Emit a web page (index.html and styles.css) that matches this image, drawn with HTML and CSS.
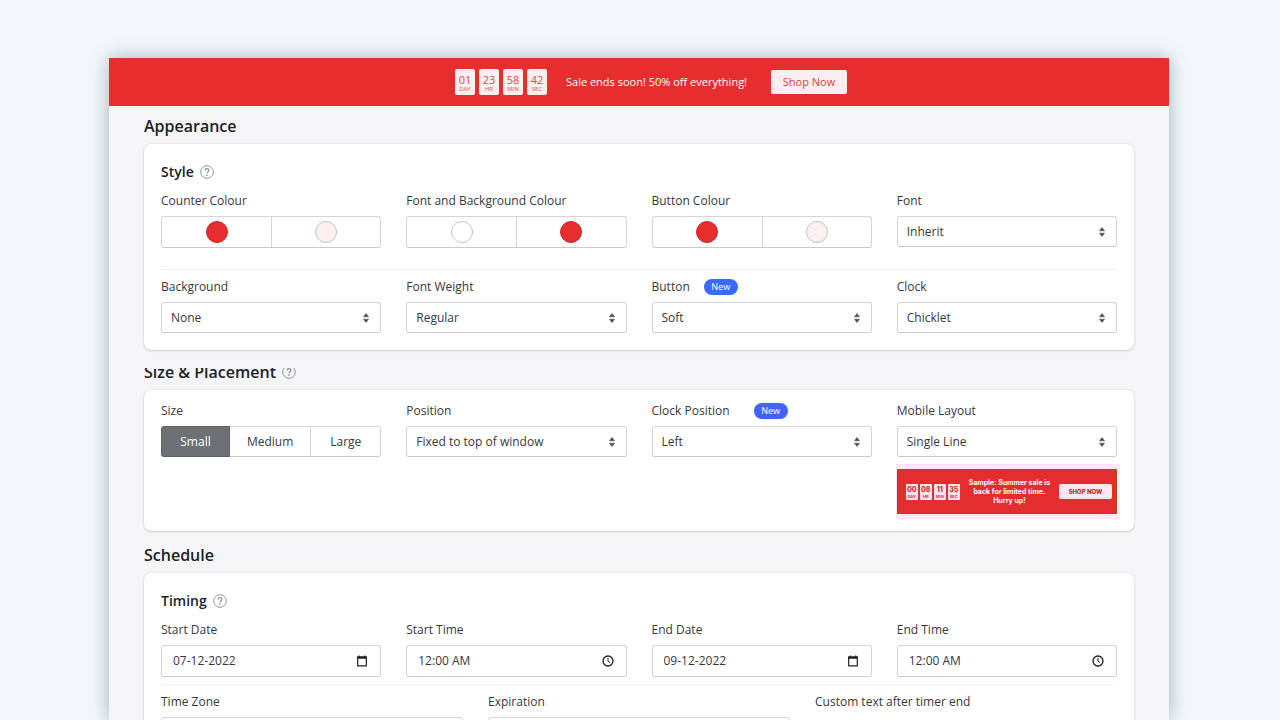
FILE: index.html
```html
<!DOCTYPE html>
<html lang="en">
<head>
<meta charset="utf-8">
<meta name="viewport" content="width=device-width, initial-scale=1">
<title>Countdown bar settings</title>
<link rel="stylesheet" href="styles.css">
</head>
<body>
<svg class="sprite" aria-hidden="true">
  <symbol id="help" viewBox="0 0 20 20">
    <circle cx="10" cy="10" r="9" fill="none" stroke="currentColor" stroke-width="1.4"/>
    <path d="M7.3 7.9C7.3 6.2 8.4 5.3 10 5.3s2.7 1 2.7 2.4c0 2-2.7 2.1-2.7 4.1" fill="none" stroke="currentColor" stroke-width="1.8"/>
    <circle cx="10" cy="14.4" r="1.2" fill="currentColor"/>
  </symbol>
  <symbol id="arrows" viewBox="0 0 8 10">
    <path d="M4 .5 6.6 3.8H1.4zM4 9.5 1.4 6.2h5.2z" fill="currentColor" stroke="currentColor" stroke-width=".5" stroke-linejoin="round"/>
  </symbol>
  <symbol id="calendar" viewBox="0 0 12 12">
    <path d="M1.7 2.2h8.6v8.6H1.7z" fill="none" stroke="currentColor" stroke-width="1.2"/>
    <path d="M1.1 1.6h9.8v2.2H1.1zM2.7.5h1.2v1.4H2.7zM8.1.5h1.2v1.4H8.1z" fill="currentColor"/>
  </symbol>
  <symbol id="clock" viewBox="0 0 12 12">
    <circle cx="6" cy="6" r="5" fill="none" stroke="currentColor" stroke-width="1.3"/>
    <path d="M6 3v3.2l2 1.4" fill="none" stroke="currentColor" stroke-width="1"/>
  </symbol>
</svg>

<div class="window">
  <header class="promo">
    <div class="timer">
      <div class="chip"><b>01</b><span>DAY</span></div>
      <div class="chip"><b>23</b><span>HR</span></div>
      <div class="chip"><b>58</b><span>MIN</span></div>
      <div class="chip"><b>42</b><span>SEC</span></div>
    </div>
    <p class="promo-text">Sale ends soon! 50% off everything!</p>
    <button class="promo-button" type="button">Shop Now</button>
  </header>

  <main class="content">
    <section class="section">
      <h1 class="section-title">Appearance</h1>
      <div class="card">
        <h2 class="card-title">Style <svg class="help"><use href="#help"/></svg></h2>
        <div class="row row-ruled">
          <div class="field">
            <span class="label">Counter Colour</span>
            <div class="swatches">
              <button type="button" aria-label="Counter text colour"><i class="dot dot-red"></i></button>
              <button type="button" aria-label="Counter box colour"><i class="dot dot-blush"></i></button>
            </div>
          </div>
          <div class="field">
            <span class="label">Font and Background Colour</span>
            <div class="swatches">
              <button type="button" aria-label="Font colour"><i class="dot dot-white"></i></button>
              <button type="button" aria-label="Background colour"><i class="dot dot-red"></i></button>
            </div>
          </div>
          <div class="field">
            <span class="label">Button Colour</span>
            <div class="swatches">
              <button type="button" aria-label="Button text colour"><i class="dot dot-red"></i></button>
              <button type="button" aria-label="Button fill colour"><i class="dot dot-blush"></i></button>
            </div>
          </div>
          <div class="field">
            <label class="label" for="font">Font</label>
            <div class="select"><select id="font"><option>Inherit</option></select><svg><use href="#arrows"/></svg></div>
          </div>
        </div>
        <div class="row">
          <div class="field">
            <label class="label" for="background">Background</label>
            <div class="select"><select id="background"><option>None</option></select><svg><use href="#arrows"/></svg></div>
          </div>
          <div class="field">
            <label class="label" for="weight">Font Weight</label>
            <div class="select"><select id="weight"><option>Regular</option></select><svg><use href="#arrows"/></svg></div>
          </div>
          <div class="field">
            <div class="label-line label-line-near"><label class="label" for="button">Button</label><span class="badge">New</span></div>
            <div class="select"><select id="button"><option>Soft</option></select><svg><use href="#arrows"/></svg></div>
          </div>
          <div class="field">
            <label class="label" for="clock-style">Clock</label>
            <div class="select"><select id="clock-style"><option>Chicklet</option></select><svg><use href="#arrows"/></svg></div>
          </div>
        </div>
      </div>
    </section>

    <section class="section">
      <h1 class="section-title section-title-cut">Size &amp; Placement <svg class="help"><use href="#help"/></svg></h1>
      <div class="card card-compact">
        <div class="row">
          <div class="field">
            <span class="label">Size</span>
            <div class="segments">
              <button class="active" type="button">Small</button>
              <button class="middle" type="button">Medium</button>
              <button type="button">Large</button>
            </div>
          </div>
          <div class="field">
            <label class="label" for="position">Position</label>
            <div class="select"><select id="position"><option>Fixed to top of window</option></select><svg><use href="#arrows"/></svg></div>
          </div>
          <div class="field">
            <div class="label-line"><label class="label" for="clock-position">Clock Position</label><span class="badge badge-violet">New</span></div>
            <div class="select"><select id="clock-position"><option>Left</option></select><svg><use href="#arrows"/></svg></div>
          </div>
          <div class="field">
            <label class="label" for="mobile">Mobile Layout</label>
            <div class="select"><select id="mobile"><option>Single Line</option></select><svg><use href="#arrows"/></svg></div>
            <div class="preview">
              <div class="mini-timer">
                <div class="mini-chip"><b>00</b><span>DAY</span></div>
                <div class="mini-chip"><b>08</b><span>HR</span></div>
                <div class="mini-chip"><b>11</b><span>MIN</span></div>
                <div class="mini-chip"><b>35</b><span>SEC</span></div>
              </div>
              <p class="preview-text">Sample: Summer sale is<br>back for limited time.<br>Hurry up!</p>
              <button class="preview-button" type="button">SHOP NOW</button>
            </div>
          </div>
        </div>
      </div>
    </section>

    <section class="section section-schedule">
      <h1 class="section-title">Schedule</h1>
      <div class="card">
        <h2 class="card-title">Timing <svg class="help"><use href="#help"/></svg></h2>
        <div class="row row-ruled row-tight">
          <div class="field">
            <label class="label" for="start-date">Start Date</label>
            <div class="entry"><input id="start-date" type="text" value="07-12-2022"><svg><use href="#calendar"/></svg></div>
          </div>
          <div class="field">
            <label class="label" for="start-time">Start Time</label>
            <div class="entry"><input id="start-time" type="text" value="12:00 AM"><svg><use href="#clock"/></svg></div>
          </div>
          <div class="field">
            <label class="label" for="end-date">End Date</label>
            <div class="entry"><input id="end-date" type="text" value="09-12-2022"><svg><use href="#calendar"/></svg></div>
          </div>
          <div class="field">
            <label class="label" for="end-time">End Time</label>
            <div class="entry"><input id="end-time" type="text" value="12:00 AM"><svg><use href="#clock"/></svg></div>
          </div>
        </div>
        <div class="row row-thirds">
          <div class="field">
            <label class="label" for="zone">Time Zone</label>
            <div class="select"><select id="zone"></select></div>
          </div>
          <div class="field">
            <label class="label" for="expiration">Expiration</label>
            <div class="select"><select id="expiration"></select></div>
          </div>
          <div class="field">
            <span class="label">Custom text after timer end</span>
          </div>
        </div>
      </div>
    </section>
  </main>
</div>
</body>
</html>
```
FILE: styles.css
```css
* { box-sizing: border-box; }

body {
  margin: 0;
  height: 100vh;
  overflow: hidden;
  padding: 58px 111px 0 109px;
  background: #f2f7fb;
  color: #36373b;
  font: 12px/20px "Open Sans", "Noto Sans", sans-serif;
}

h1, h2, p { margin: 0; }
button, input, select { font: inherit; color: inherit; }
button { padding: 0; border: 0; background: none; }
.sprite { display: none; }

.window {
  height: 100%;
  overflow: hidden;
  background: #f5f5f8;
  box-shadow: 0 0 18px rgba(70, 95, 100, 0.45);
}

.promo {
  display: flex;
  align-items: center;
  justify-content: center;
  height: 48px;
  padding-left: 24px;
  background: #e62e2e;
  color: #fff;
  font-size: 11px;
}

.timer { display: flex; gap: 4px; margin-right: 19px; }

.chip {
  display: flex;
  flex-direction: column;
  align-items: center;
  width: 20px;
  height: 26px;
  padding-top: 4px;
  border-radius: 2px;
  background: #faeff0;
  color: #e0494c;
}

.chip b { font-size: 11px; line-height: 13px; font-weight: 400; }
.chip span { font-size: 6px; line-height: 7px; }

.promo-text { font-weight: 500; }

.promo-button {
  width: 76px;
  height: 24px;
  margin-left: 24px;
  border-radius: 2px;
  background: #faeff0;
  color: #dc3f42;
}

.content { padding: 8px 35px 0; }
.section { padding-bottom: 10px; }
.section-schedule { padding-top: 2px; }

.section-title {
  display: flex;
  align-items: center;
  gap: 6px;
  margin-bottom: 6px;
  color: #202226;
  font-size: 16px;
  line-height: 24px;
  font-weight: 600;
}

.section-title-cut { clip-path: inset(8px 0 0 0); }

.help { width: 14px; height: 14px; color: #8d9196; }

.card {
  padding: 16px 17px 17px;
  border-radius: 7px;
  background: #fff;
  box-shadow: 0 0 2px rgba(60, 65, 80, 0.2), 0 1px 2px rgba(60, 65, 80, 0.18);
}

.card-compact { padding-top: 11px; }

.card-title {
  display: flex;
  align-items: center;
  gap: 6px;
  margin-bottom: 7px;
  color: #202226;
  font-size: 14px;
  line-height: 24px;
  font-weight: 600;
}

.row {
  display: grid;
  grid-template-columns: repeat(4, minmax(0, 1fr));
  gap: 25px;
}

.row-thirds { grid-template-columns: repeat(3, minmax(0, 1fr)); }

.row-ruled {
  margin-bottom: 7px;
  padding-bottom: 21px;
  border-bottom: 1px solid #eff1f3;
}

.row-tight { padding-bottom: 7px; }

.label { display: block; margin-bottom: 5px; }

.label-line { display: flex; gap: 24px; margin-bottom: 5px; }
.label-line .label { margin: 0; }
.label-line-near { gap: 14px; }

.badge {
  align-self: center;
  width: 34px;
  border-radius: 8px;
  background: #376cfb;
  color: #fff;
  font-size: 9px;
  line-height: 16px;
  text-align: center;
}

.badge-violet { background: #4262f9; box-shadow: 0 0 2px 1px #e0faff; }

.swatches, .segments, .select, .entry {
  border: 1px solid #d2d6d9;
  border-bottom-color: #c6cacd;
  border-radius: 3px;
  background: #fff;
}

.swatches {
  display: grid;
  grid-template-columns: 1fr 1fr;
  height: 32px;
}

.swatches button { display: grid; place-items: center; }
.swatches button + button { border-left: 1px solid #d2d6d9; }

.dot {
  width: 22px;
  height: 22px;
  border: 1px solid #c4c4c6;
  border-radius: 50%;
}

.dot-red { background: #e62e2e; border-color: #c3282c; }
.dot-blush { background: #faeff1; }
.dot-white { background: #fff; }

.select { display: grid; height: 31px; align-items: center; }
.select > * { grid-area: 1 / 1; }

.select select {
  width: 100%;
  height: 100%;
  padding: 0 24px 0 9px;
  border: 0;
  background: none;
  appearance: none;
}

.select svg {
  justify-self: end;
  width: 8px;
  height: 10px;
  margin-right: 10px;
  color: #4b4d50;
  pointer-events: none;
}

.segments { display: grid; grid-template-columns: 68px 1fr 69px; height: 31px; }
.segments .middle { border-right: 1px solid #d2d6d9; }
.segments .active {
  margin: -1px 0 -1px -1px;
  border: 1px solid #5d6065;
  border-radius: 3px 0 0 3px;
  background: #6d7075;
  color: #fff;
}

.entry { display: flex; align-items: center; height: 32px; padding: 0 12px 0 11px; }
.entry input { flex: 1; min-width: 0; padding: 0; border: 0; outline: 0; background: none; }
.entry svg { width: 12px; height: 12px; color: #1e1f21; }

.preview {
  display: flex;
  align-items: center;
  justify-content: space-between;
  height: 45px;
  margin-top: 12px;
  padding: 0 4px 0 8px;
  border: 1px solid #94551d;
  background: #e42d2e;
  color: #fff;
  font-family: Inter, "Open Sans", sans-serif;
  box-shadow: 3px 5px 0 #ffe7fb, 3px -5px 0 #ffe7fb, -1px 5px 0 #ffe7fb, -1px -5px 0 #ffe7fb;
}

.mini-timer { display: flex; gap: 2px; }

.mini-chip {
  display: flex;
  flex-direction: column;
  align-items: center;
  width: 12px;
  height: 16px;
  padding-top: 2px;
  border-radius: 1px;
  background: #ffe3ee;
  color: #cf3038;
}

.mini-chip b { font-size: 7px; line-height: 8px; font-weight: 800; }
.mini-chip span { font-size: 4px; line-height: 5px; font-weight: 700; }

.preview-text { font-size: 7px; line-height: 9px; font-weight: 700; text-align: center; white-space: nowrap; }

.preview-button {
  width: 53px;
  height: 15px;
  border-radius: 2px;
  background: #ffe6f6;
  color: #a3382c;
  font-size: 6px;
  line-height: 15px;
  font-weight: 800;
}
```
